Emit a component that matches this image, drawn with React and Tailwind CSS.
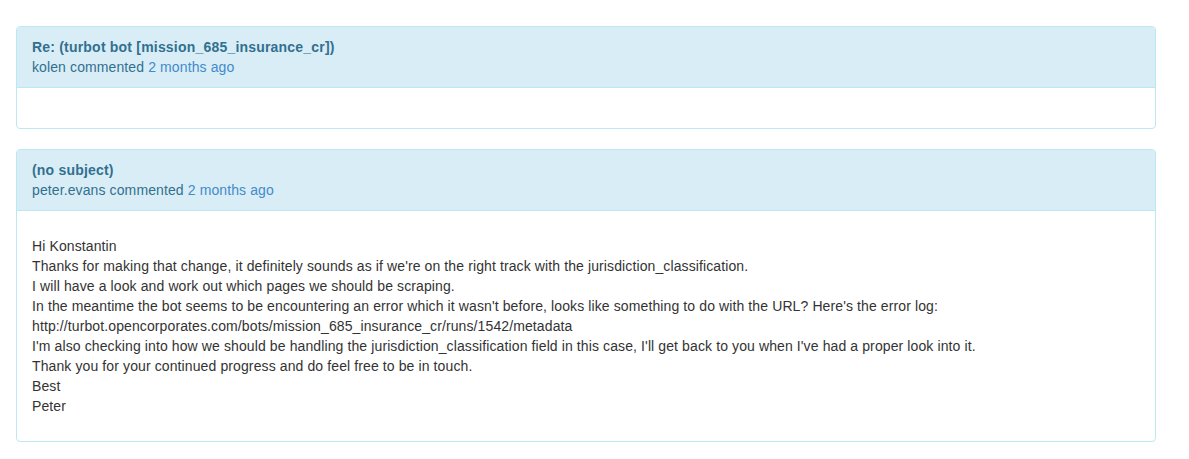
const comments = [
  {
    subject: 'Re: (turbot bot [mission_685_insurance_cr])',
    author: 'kolen',
    when: '2 months ago',
    lines: [],
  },
  {
    subject: '(no subject)',
    author: 'peter.evans',
    when: '2 months ago',
    lines: [
      'Hi Konstantin',
      "Thanks for making that change, it definitely sounds as if we're on the right track with the jurisdiction_classification.",
      'I will have a look and work out which pages we should be scraping.',
      "In the meantime the bot seems to be encountering an error which it wasn't before, looks like something to do with the URL? Here's the error log:",
      'http://turbot.opencorporates.com/bots/mission_685_insurance_cr/runs/1542/metadata',
      "I'm also checking into how we should be handling the jurisdiction_classification field in this case, I'll get back to you when I've had a proper look into it.",
      'Thank you for your continued progress and do feel free to be in touch.',
      'Best',
      'Peter',
    ],
  },
]

function Comment({ c }) {
  return (
    <div className="mb-[20px] w-[1140px] rounded-[4px] border border-[#bce8f1] bg-white">
      {/* Heading */}
      <div className="rounded-t-[3px] border-b border-[#bce8f1] bg-[#d9edf7] px-[15px] py-[10px] text-[#31708f]">
        <div className="font-bold tracking-[0.2px]">{c.subject}</div>
        <div>
          {c.author} commented <a className="text-[#428bca]">{c.when}</a>
        </div>
      </div>
      {/* Body */}
      <div className="px-[15px] py-[15px]">
        {c.lines.length ? (
          <p className="my-[10px] text-[#333]">
            {c.lines.map((l, i) => (
              <span key={i} className="block">{l}</span>
            ))}
          </p>
        ) : (
          <div className="h-[10px]" />
        )}
      </div>
    </div>
  )
}

export default function App() {
  return (
    <div className="min-h-[459px] bg-white pl-[16px] pt-[26px] font-['Liberation_Sans',Arial,sans-serif] text-[14px] leading-[20px] tracking-[0.11px]">
      {comments.map((c, i) => (
        <Comment key={i} c={c} />
      ))}
    </div>
  )
}
